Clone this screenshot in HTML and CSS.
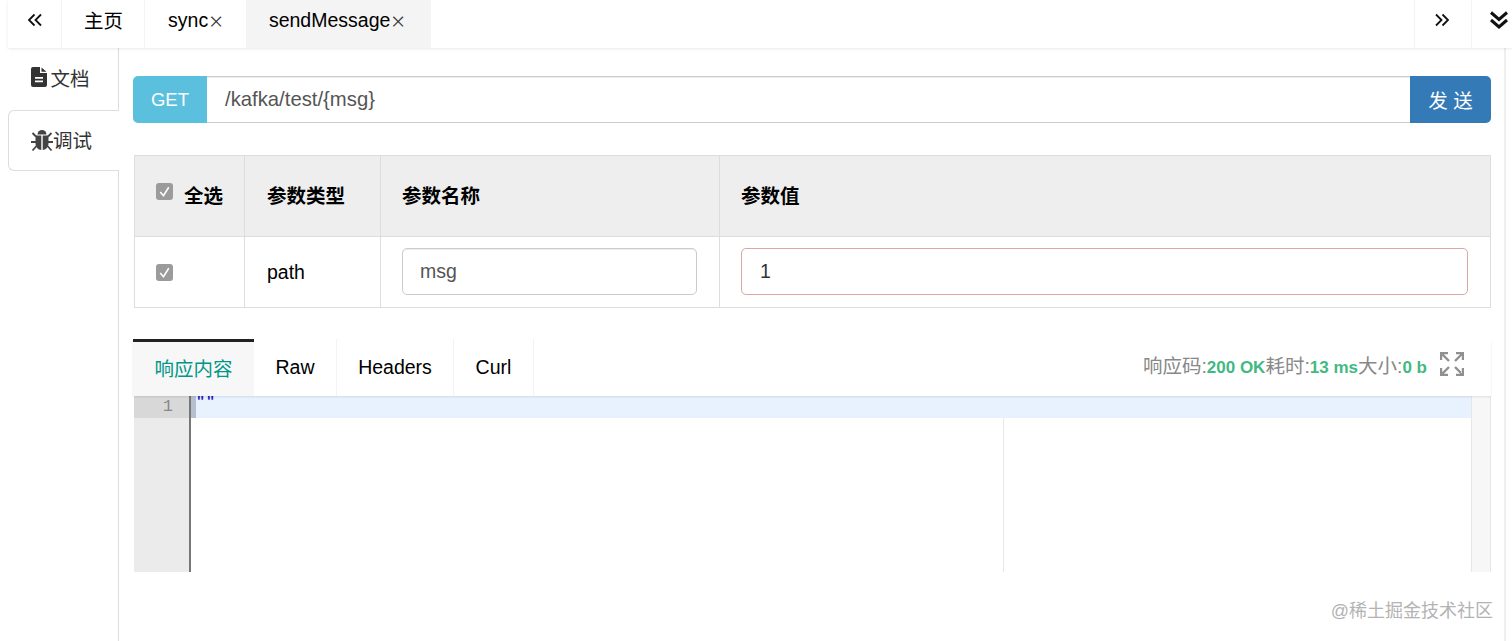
FILE: index.html
```html
<!DOCTYPE html>
<html lang="zh">
<head>
<meta charset="utf-8">
<title>sendMessage</title>
<link rel="stylesheet" href="styles.css">
</head>
<body>
<div class="page">
  <header class="topbar">
    <div class="nav-btn nav-left"><svg class="chev" viewBox="0 0 16 14"><path d="M7.500 1.500 2 7l5.500 5.500M14 1.500 8.500 7l5.500 5.500"/></svg></div>
    <div class="tab home">主页</div>
    <div class="tab sync">sync<span class="x">×</span></div>
    <div class="tab send active">sendMessage<span class="x">×</span></div>
    <div class="spacer"></div>
    <div class="nav-btn nav-right"><svg class="chev" viewBox="0 0 16 14"><path d="M2 1.500 7.500 7 2 12.500M8.500 1.500 14 7l-5.500 5.500"/></svg></div>
    <div class="nav-btn nav-down"><svg class="chev-down" viewBox="0 0 20 20"><path d="M2 2.500l8 7 8-7M2 10l8 7 8-7"/></svg></div>
  </header>
  <div class="body">
    <aside class="side">
      <div class="side-tab doc">
        <svg class="ic-file" viewBox="0 0 16 20"><path fill-rule="evenodd" d="M2 0H9v6h7v12a2 2 0 0 1-2 2H2a2 2 0 0 1-2-2V2A2 2 0 0 1 2 0zM10.500.5 15.500 4.800H10.500zM4 10v1.800h8V10zm0 3.500v1.800h8v-1.800z"/></svg><span>文档</span>
      </div>
      <div class="side-tab debug">
        <svg class="ic-bug" viewBox="0 0 22 24"><path d="M6.500 6.500a4.500 4.500 0 0 1 9 0z"/><path d="M4.500 7.500h5.800V22C7 21.800 4.500 19 4.500 15zM11.700 7.500h5.800V15c0 4-2.500 6.800-5.800 7z"/><path class="legs" d="M5 8.500 1.500 5M17 8.500 20.500 5M5 14H0M17 14h5M5.500 18 1.500 22.500M16.500 18l4 4.500"/></svg><span>调试</span>
      </div>
    </aside>
    <main class="main">
      <div class="urlbar">
        <div class="method">GET</div>
        <div class="url">/kafka/test/{msg}</div>
        <div class="sendbtn">发 送</div>
      </div>
      <table class="params">
        <colgroup><col class="c1"><col class="c2"><col class="c3"><col class="c4"></colgroup>
        <thead>
          <tr>
            <th><span class="checkall"><span class="cb"><svg viewBox="0 0 16 16"><path d="M4 8.500 7 12l5-8"/></svg></span>全选</span></th>
            <th>参数类型</th>
            <th>参数名称</th>
            <th>参数值</th>
          </tr>
        </thead>
        <tbody>
          <tr>
            <td><span class="cb"><svg viewBox="0 0 16 16"><path d="M4 8.500 7 12l5-8"/></svg></span></td>
            <td>path</td>
            <td><div class="field">msg</div></td>
            <td><div class="field invalid">1</div></td>
          </tr>
        </tbody>
      </table>
      <section class="resp">
        <div class="resp-head">
          <div class="rtab on">响应内容</div>
          <div class="rtab raw">Raw</div>
          <div class="rtab hdr">Headers</div>
          <div class="rtab curl">Curl</div>
          <div class="spacer"></div>
          <div class="status">响应码:<b>200 OK</b>耗时:<b>13 ms</b>大小:<b>0 b</b></div>
          <svg class="ic-expand" viewBox="0 0 24 24"><path d="M1 8V1h7M1 1l8 8M23 8V1h-7M23 1l-8 8M1 16v7h7M1 23l8-8M23 16v7h-7M23 23l-8-8"/></svg>
        </div>
        <div class="editor">
          <div class="gutter"><div class="ln">1</div></div>
          <div class="code">
            <div class="line"><span class="cursor"></span><span class="str">""</span></div>
            <div class="margin"></div>
          </div>
          <div class="scroll"></div>
        </div>
      </section>
    </main>
    <div class="edge"></div>
  </div>
  <div class="mark">@稀土掘金技术社区</div>
</div>
</body>
</html>
```
FILE: styles.css
```css
* { box-sizing: border-box; }
html, body { margin: 0; height: 100%; background: #fff; overflow: hidden; }
body { font-family: "Liberation Sans", "Noto Sans CJK SC", sans-serif; font-size: 19.5px; color: #000; }
.page { position: relative; height: 641px; display: flex; flex-direction: column; }

.topbar { height: 48px; display: flex; margin-left: 8px; box-shadow: 0 1px 3px rgba(0,0,0,.09); position: relative; z-index: 2; background: #fff; }
.spacer { flex: 1; }
.tab { display: flex; align-items: center; justify-content: center; border-right: 1px solid #f3f3f3; height: 48px; padding-bottom: 7px; }
.home { width: 83px; padding-bottom: 10px; padding-left: 1px; }
.sync { width: 102px; }
.send { width: 184px; background: #f4f4f4; border-right: 0; padding-right: 4px; }
.x { font-family: "Noto Sans", sans-serif; font-size: 24px; font-weight: 300; color: #333; line-height: 1; margin-left: 1px; }
.nav-btn { display: flex; align-items: center; justify-content: center; height: 48px; padding-bottom: 9px; }
.nav-left { width: 54px; border-right: 1px solid #f3f3f3; }
.nav-right { width: 57px; border-left: 1px solid #f3f3f3; padding-right: 2px; }
.nav-down { width: 41px; border-left: 1px solid #f3f3f3; padding-bottom: 0; }
.chev { width: 16px; height: 14px; fill: none; stroke: #111; stroke-width: 1.800; }
.chev-down { width: 20px; height: 20px; fill: none; stroke: #111; stroke-width: 3; margin-left: 14px; margin-bottom: 9px; }

.body { flex: 1; display: flex; min-height: 0; }
.side { width: 111px; margin-left: 8px; border-right: 1px solid #ddd; flex: none; }
.side-tab { display: flex; align-items: center; justify-content: center; color: #333; padding-right: 5px; }
.side-tab span { margin-left: 3px; }
.doc { height: 62px; padding-bottom: 4px; }
.debug { height: 61px; background: #fff; border: 1px solid #ddd; border-right: 0; border-radius: 6px 0 0 6px; margin-right: -1px; padding-bottom: 2px; padding-right: 5px; }
.debug span { margin-left: 0; }
.ic-file { width: 16px; height: 20px; fill: #333; }
.ic-bug { width: 22px; height: 24px; fill: #444; }
.ic-bug .legs { fill: none; stroke: #444; stroke-width: 1.800; }

.main { width: 1358px; margin-left: 14px; flex: none; padding-top: 28px; }
.urlbar { display: flex; height: 47px; }
.method { width: 74px; background: #5bc0de; color: #fff; border-radius: 5px 0 0 5px; display: flex; align-items: center; justify-content: center; font-size: 18.500px; }
.url { flex: 1; border: 1px solid #ccc; border-left: 0; border-right: 0; box-shadow: inset 0 1px 1px rgba(0,0,0,.075); color: #555; display: flex; align-items: center; padding-left: 18px; padding-bottom: 1px; font-size: 20.300px; }
.sendbtn { width: 81px; background: #337ab7; color: #fff; border-radius: 0 5px 5px 0; display: flex; align-items: center; justify-content: center; }

.params { margin: 32px 0 0 1px; width: 1357px; border-collapse: collapse; table-layout: fixed; }
.c1 { width: 110px; } .c2 { width: 136px; } .c3 { width: 339px; }
.params th, .params td { border: 1px solid #ddd; padding: 0 22px; text-align: left; vertical-align: middle; }
.params th:nth-child(n+3), .params td:nth-child(n+3) { padding-left: 21px; }
.params th { height: 81px; background: #eee; font-weight: 700; padding-bottom: 3px; }
.params td { height: 71px; }
.checkall { display: flex; align-items: center; white-space: nowrap; }
.checkall .cb { margin: -6px 11px 0 -1px; }
.cb { display: block; width: 17px; height: 17px; border-radius: 3px; background: #9b9b9b; flex: none; margin-left: -1px; }
.cb svg { display: block; width: 17px; height: 17px; fill: none; stroke: #fff; stroke-width: 1.500; }
.field { height: 47px; border: 1px solid #ccc; border-radius: 5px; box-shadow: inset 0 1px 1px rgba(0,0,0,.075); color: #555; display: flex; align-items: center; padding-left: 17px; margin-top: -1px; }
.invalid { border-color: #dca6a6; box-shadow: none; color: #333; padding-left: 18px; }

.resp { margin-top: 31px; }
.resp-head { height: 57px; display: flex; align-items: center; box-shadow: 0 1px 2px rgba(0,0,0,.1); position: relative; z-index: 1; background: #fff; }
.rtab { height: 57px; display: flex; align-items: center; justify-content: center; border-right: 1px solid #f3f3f3; padding-bottom: 1px; }
.on { width: 121px; background: #f7f7f7; color: #009688; border-top: 3px solid #222; border-right: 0; padding-bottom: 3px; }
.raw { width: 83px; }
.hdr { width: 117px; }
.curl { width: 80px; }
.status { color: #888; white-space: nowrap; margin-right: 13px; padding-bottom: 6px; }
.status b { color: #42b983; font-size: 17px; }
.ic-expand { width: 24px; height: 24px; fill: none; stroke: #909090; stroke-width: 2.400; margin-right: 27px; margin-bottom: 7px; }

.editor { height: 176px; margin-left: 1px; display: flex; background: #fff; }
.gutter { width: 57px; background: #ebebeb; border-right: 2px solid #777; }
.ln { height: 22px; background: #d8d8d8; color: #888; font: 17px/22px "Liberation Mono", monospace; text-align: right; padding-right: 16px; }
.code { flex: 1; position: relative; }
.line { height: 22px; background: #e8f2ff; display: flex; }
.cursor { width: 5px; background: #b4bfd0; }
.str { color: #1a1ac0; font: 700 15px/14px "Liberation Mono", monospace; letter-spacing: 1px; }
.margin { position: absolute; top: 22px; bottom: 0; left: 812px; border-left: 1px solid #e8e8e8; }
.scroll { width: 20px; background: #f7f7f7; border-left: 1px solid #e6e6e6; border-right: 1px solid #e6e6e6; }

.edge { margin-left: 13px; width: 2px; background: #efefef; }
.mark { position: absolute; right: 19px; top: 600px; color: #b3b3b3; font-size: 18px; line-height: 22px; }
```
